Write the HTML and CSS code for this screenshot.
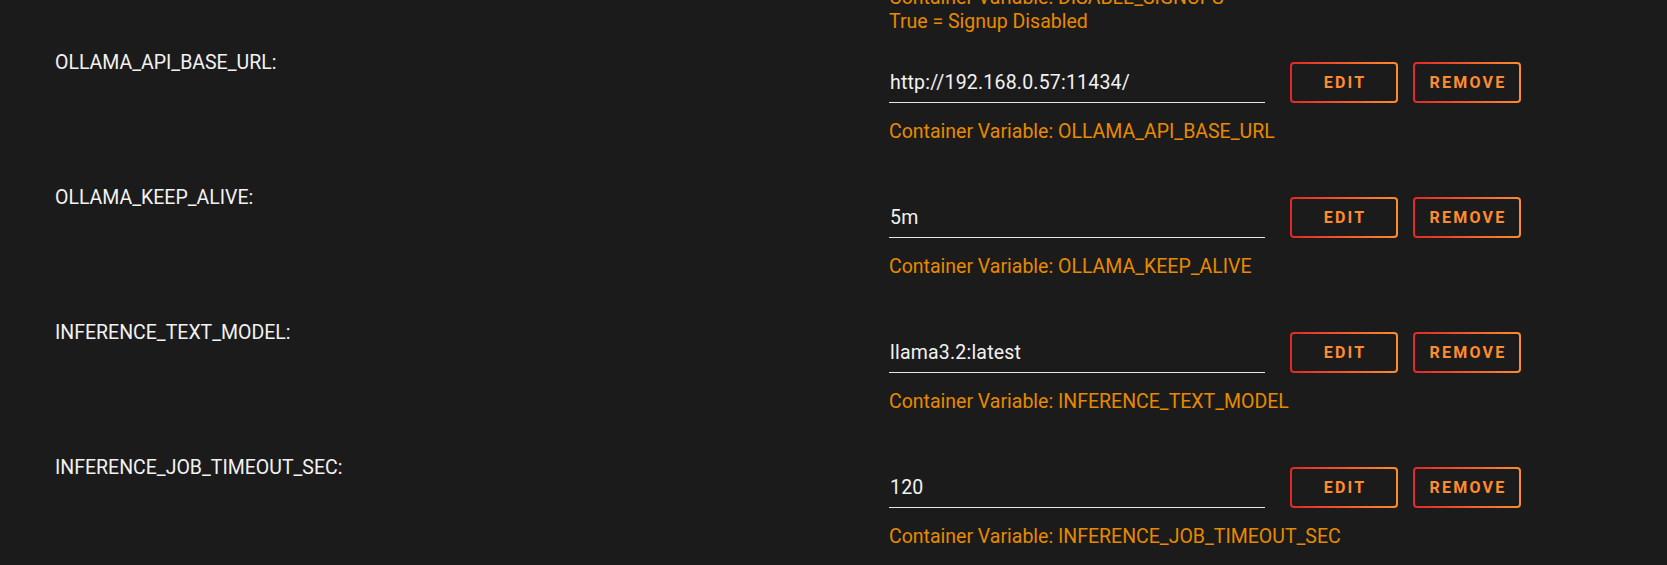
FILE: index.html
```html
<!DOCTYPE html>
<html>
<head>
<meta charset="utf-8">
<link rel="stylesheet" href="styles.css">
</head>
<body>
<div class="page">
  <div class="prev">
    <div class="hint">Container Variable: DISABLE_SIGNUPS<br>True = Signup Disabled</div>
  </div>

  <div class="row">
    <div class="label">OLLAMA_API_BASE_URL:</div>
    <div class="right">
      <div class="field">
        <input class="value" type="text" value="http://192.168.0.57:11434/">
        <button class="btn">Edit</button>
        <button class="btn">Remove</button>
      </div>
      <div class="hint">Container Variable: OLLAMA_API_BASE_URL<br>&nbsp;</div>
    </div>
  </div>

  <div class="row">
    <div class="label">OLLAMA_KEEP_ALIVE:</div>
    <div class="right">
      <div class="field">
        <input class="value" type="text" value="5m">
        <button class="btn">Edit</button>
        <button class="btn">Remove</button>
      </div>
      <div class="hint">Container Variable: OLLAMA_KEEP_ALIVE<br>&nbsp;</div>
    </div>
  </div>

  <div class="row">
    <div class="label">INFERENCE_TEXT_MODEL:</div>
    <div class="right">
      <div class="field">
        <input class="value" type="text" value="llama3.2:latest">
        <button class="btn">Edit</button>
        <button class="btn">Remove</button>
      </div>
      <div class="hint">Container Variable: INFERENCE_TEXT_MODEL<br>&nbsp;</div>
    </div>
  </div>

  <div class="row">
    <div class="label">INFERENCE_JOB_TIMEOUT_SEC:</div>
    <div class="right">
      <div class="field">
        <input class="value" type="text" value="120">
        <button class="btn">Edit</button>
        <button class="btn">Remove</button>
      </div>
      <div class="hint">Container Variable: INFERENCE_JOB_TIMEOUT_SEC<br>&nbsp;</div>
    </div>
  </div>
</div>
</body>
</html>
```

FILE: styles.css
```css
html, body {
  margin: 0;
  padding: 0;
  background: #1c1b1b;
  overflow: hidden;
}

.page {
  font-family: Roboto, "Noto Sans", sans-serif;
  font-size: 19.5px;
  line-height: 24px;
  color: #f2f2f2;
  padding-left: 55px;
}

.prev {
  margin-top: -14px;
  padding-left: 834px;
  margin-bottom: 17px;
}

.row {
  display: grid;
  grid-template-columns: 834px auto;
  margin-bottom: 18px;
}

.label {
  color: #f2f2f2;
}

.right {
  display: flex;
  flex-direction: column;
}

.field {
  display: flex;
  align-items: center;
  margin-top: 11px;
  height: 41px;
}

.value {
  box-sizing: border-box;
  width: 376px;
  height: 41px;
  margin: 0 25px 0 0;
  padding: 0 0 0 1px;
  background: transparent;
  border: none;
  border-bottom: 1px solid #e5e5e5;
  color: #f2f2f2;
  font-family: Roboto, "Noto Sans", sans-serif;
  font-size: 19.5px;
  letter-spacing: 0.2px;
  outline: none;
}

.btn {
  box-sizing: border-box;
  width: 108px;
  height: 41px;
  margin: 0 15px 0 0;
  padding: 0 0 0 2px;
  border: 2px solid transparent;
  border-radius: 4px;
  background: linear-gradient(#1c1b1b, #1c1b1b) padding-box,
              linear-gradient(90deg, #e22828, #ff8c2f) border-box;
  color: #ff8c2f;
  font-family: Roboto, "Noto Sans", sans-serif;
  font-weight: bold;
  font-size: 16px;
  letter-spacing: 2.2px;
  text-transform: uppercase;
  display: flex;
  align-items: center;
  justify-content: center;
}

.hint {
  color: #e68a00;
  margin-top: 17px;
}

.prev .hint {
  margin-top: 0;
}
```
